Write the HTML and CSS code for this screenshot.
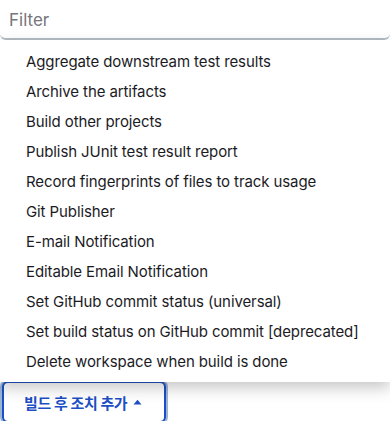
FILE: index.html
```html
<!DOCTYPE html>
<html lang="ko">
<head>
  <meta charset="UTF-8" />
  <meta name="viewport" content="width=device-width, initial-scale=1.0" />
  <title>빌드 후 조치 추가</title>
  <link rel="stylesheet" href="styles.css">
</head>
<body>
  <div class="dropdown">
    <input class="filter" type="text" placeholder="Filter" />
    <ul class="menu">
      <li>Aggregate downstream test results</li>
      <li>Archive the artifacts</li>
      <li>Build other projects</li>
      <li>Publish JUnit test result report</li>
      <li>Record fingerprints of files to track usage</li>
      <li>Git Publisher</li>
      <li>E-mail Notification</li>
      <li>Editable Email Notification</li>
      <li>Set GitHub commit status (universal)</li>
      <li>Set build status on GitHub commit [deprecated]</li>
      <li>Delete workspace when build is done</li>
    </ul>
  </div>
  <button class="add-btn">
    빌드 후 조치 추가
    <svg class="caret" width="9" height="6" viewBox="0 0 9 6"><path d="M0.5 5.5 L4.5 0.8 L8.5 5.5 Z" fill="currentColor"/></svg>
  </button>
</body>
</html>
```

FILE: styles.css
```css
:root {
  --text: #1b1b1f;
  --blue: #1d4fc4;
  --ring: #9ab4d6;
}

body {
  margin: 0;
  font-family: Inter, "Noto Sans CJK KR", sans-serif;
  background: #fff;
  overflow: hidden;
}

.dropdown {
  position: relative;
  z-index: 2;
}

.filter {
  display: block;
  box-sizing: border-box;
  width: 100%;
  height: 42px;
  margin-top: -2px;
  padding: 4px 9px 0;
  border: none;
  border-bottom: 2px solid #b4bcc4;
  border-radius: 0 0 6px 6px;
  font-family: inherit;
  font-size: 17px;
  color: var(--text);
  background: #fff;
  outline: none;
}

.filter::placeholder {
  color: #76767c;
}

.menu {
  list-style: none;
  margin: 0;
  padding: 7px 0 5px;
  background: #fff;
  box-shadow: 0 6px 14px rgba(0, 0, 0, 0.22);
}

.menu li {
  height: 30px;
  line-height: 30px;
  padding-left: 26px;
  font-size: 15px;
  letter-spacing: -0.1px;
  color: var(--text);
  white-space: nowrap;
}

.add-btn {
  display: flex;
  align-items: center;
  gap: 6px;
  margin: -1px 0 0 2px;
  height: 42px;
  padding: 0 22px 0 20px;
  border: 2px solid var(--blue);
  border-radius: 6px;
  box-shadow: 0 0 0 2px var(--ring);
  background: #fff;
  color: var(--blue);
  font-family: inherit;
  font-size: 15px;
  font-weight: 700;
  letter-spacing: -0.4px;
}

.caret {
  margin-top: -1px;
}
```
